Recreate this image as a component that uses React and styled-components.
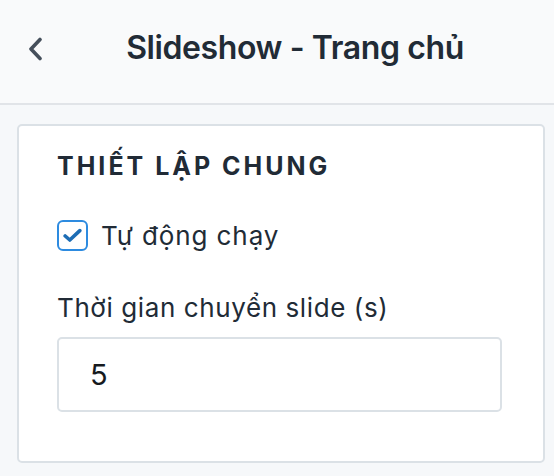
import React from 'react';
import styled, {createGlobalStyle} from 'styled-components';

const GlobalStyle = createGlobalStyle`
    html, body {
        margin: 0;
        padding: 0;
        background: #f6f8fa;
    }
    body {
        font-family: Inter, "Noto Sans", sans-serif;
        color: #212b36;
    }
`;

const Page = styled.main`
    width: 554px;
    height: 476px;
    overflow: hidden;
    background: #f6f8fa;
`;

const Header = styled.header`
    height: 105px;
    box-sizing: border-box;
    padding-bottom: 9px;
    display: grid;
    grid-template-columns: 64px 1fr 28px;
    align-items: center;
    background: #f9fafb;
    border-bottom: 2px solid #e1e4e8;
`;

const BackButton = styled.button`
    display: flex;
    align-items: center;
    padding: 4px 0 0 27px;
    height: 40px;
    border: 0;
    background: none;
    color: #454f5b;
    cursor: pointer;
`;

const Title = styled.h1`
    margin: 0;
    text-align: center;
    font-size: 32px;
    font-weight: 600;
    letter-spacing: -0.4px;
    color: #212b36;
`;

const Card = styled.section`
    margin: 19px 9px 0 17px;
    height: 339px;
    box-sizing: border-box;
    background: #fff;
    border: 2px solid #dbe1e6;
    border-radius: 5px;
    padding: 25px 39px 0 38px;
    display: flex;
    flex-direction: column;
`;

const SectionTitle = styled.h2`
    margin: 0;
    font-size: 25px;
    line-height: 30px;
    font-weight: 700;
    letter-spacing: 3px;
    text-transform: uppercase;
    color: #212b36;
`;

const CheckRow = styled.label`
    display: flex;
    align-items: center;
    gap: 13px;
    margin-top: 39px;
    font-size: 26px;
    line-height: 31px;
    letter-spacing: 0.9px;
    color: #212b36;
`;

const CheckBox = styled.span`
    width: 31px;
    height: 31px;
    flex: none;
    box-sizing: border-box;
    border: 2px solid #2d8be0;
    border-radius: 6px;
    display: flex;
    align-items: center;
    justify-content: center;
    background: #fff;
    color: #1d6db5;
`;

const FieldLabel = styled.label`
    margin-top: 41px;
    font-size: 26px;
    line-height: 31px;
    letter-spacing: 0.6px;
    color: #212b36;
`;

const NumberInput = styled.input`
    margin-top: 14px;
    width: 445px;
    height: 75px;
    box-sizing: border-box;
    border: 2px solid #dbe1e6;
    border-radius: 5px;
    padding: 0 31px;
    font-family: Inter, "Noto Sans", sans-serif;
    font-size: 29px;
    color: #161a1e;
    background: #fff;
    outline: none;
`;

const App = () => (
    <Page>
        <GlobalStyle />
        <Header>
            <BackButton aria-label="Quay lại">
                <svg width="16" height="24" viewBox="0 0 16 24" fill="none">
                    <path d="M13 2.5 L4 12 L13 21.5" stroke="currentColor" strokeWidth="3.6" strokeLinecap="round" strokeLinejoin="round" />
                </svg>
            </BackButton>
            <Title>Slideshow - Trang chủ</Title>
            <span />
        </Header>

        <Card>
            <SectionTitle>Thiết lập chung</SectionTitle>
            <CheckRow>
                <CheckBox>
                    <svg width="19" height="15" viewBox="0 0 19 15" fill="none">
                        <path d="M2.2 8 L6.8 12 L16.8 2.6" stroke="currentColor" strokeWidth="3.6" strokeLinecap="round" strokeLinejoin="round" />
                    </svg>
                </CheckBox>
                Tự động chạy
            </CheckRow>
            <FieldLabel htmlFor="slide-time">Thời gian chuyển slide (s)</FieldLabel>
            <NumberInput id="slide-time" type="text" defaultValue="5" />
        </Card>
    </Page>
);

export default App;
